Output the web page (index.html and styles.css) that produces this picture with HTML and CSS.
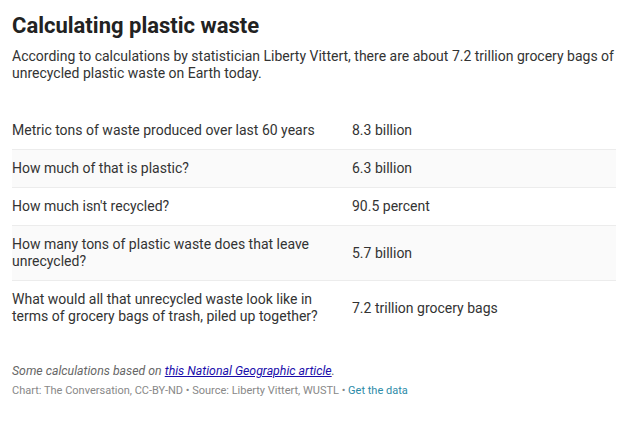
FILE: index.html
```html
<!DOCTYPE html>
<html lang="en">
<head>
  <meta charset="UTF-8" />
  <title>Calculating plastic waste</title>
  <link rel="stylesheet" href="styles.css">
</head>
<body>
  <div class="chart">
    <!-- Header -->
    <h1 class="headline">Calculating plastic waste</h1>
    <p class="intro">According to calculations by statistician Liberty Vittert, there are about 7.2 trillion grocery bags of unrecycled plastic waste on Earth today.</p>

    <!-- Table -->
    <table class="data-table">
      <tbody>
        <tr>
          <td class="label">Metric tons of waste produced over last 60 years</td>
          <td>8.3 billion</td>
        </tr>
        <tr>
          <td class="label">How much of that is plastic?</td>
          <td>6.3 billion</td>
        </tr>
        <tr>
          <td class="label">How much isn't recycled?</td>
          <td>90.5 percent</td>
        </tr>
        <tr>
          <td class="label">How many tons of plastic waste does that leave unrecycled?</td>
          <td>5.7 billion</td>
        </tr>
        <tr>
          <td class="label">What would all that unrecycled waste look like in terms of grocery bags of trash, piled up together?</td>
          <td>7.2 trillion grocery bags</td>
        </tr>
      </tbody>
    </table>

    <!-- Footer -->
    <div class="notes">Some calculations based on <a href="#">this National Geographic article</a>.</div>
    <div class="footer">Chart: The Conversation, CC-BY-ND &bull; Source: Liberty Vittert, WUSTL &bull; <a href="#" class="data-link">Get the data</a></div>
  </div>
</body>
</html>
```

FILE: styles.css
```css
body {
  margin: 0;
  font-family: Roboto, "Liberation Sans", sans-serif;
  background-color: #ffffff;
  color: #333;
}

.chart {
  padding: 12px 14px 0 12px;
}

.headline {
  margin: 0;
  font-size: 22px;
  line-height: 28px;
  font-weight: bold;
  color: #222;
}

.intro {
  margin: 8px 0 0;
  font-size: 14px;
  line-height: 17px;
  color: #333;
}

.data-table {
  width: 100%;
  margin-top: 30px;
  border-collapse: collapse;
  font-size: 14px;
  line-height: 17px;
  color: #333;
}

.data-table td {
  padding: 10px 0;
  border-bottom: 1px solid #ececec;
  vertical-align: middle;
  text-align: left;
}

.data-table tr:last-child td {
  border-bottom: none;
}

.data-table tr:nth-child(even) td {
  background-color: #fafafa;
}

.data-table .label {
  width: 320px;
  padding-right: 20px;
}

.notes {
  margin-top: 29px;
  font-size: 12.3px;
  line-height: 15px;
  font-style: italic;
  color: #666;
}

.notes a {
  color: #1a0dab;
}

.footer {
  margin-top: 5px;
  font-size: 11px;
  line-height: 14px;
  color: #888;
}

.data-link {
  color: #2d8ba8;
  text-decoration: none;
}
```
